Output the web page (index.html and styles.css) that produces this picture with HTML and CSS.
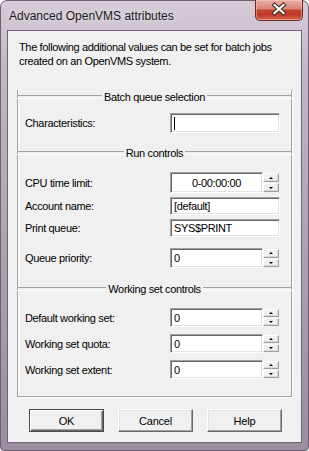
FILE: index.html
```html
<!DOCTYPE html>
<html lang="en">
<head>
    <meta charset="UTF-8">
    <title>Advanced OpenVMS attributes</title>
    <link rel="stylesheet" href="styles.css">
</head>
<body>
    <div class="window">
        <div class="titlebar">
            <span class="title">Advanced OpenVMS attributes</span>
            <div class="close">
                <svg width="48" height="21" viewBox="0 0 48 21">
                    <path d="M19.5 6 L28.5 14 M28.5 6 L19.5 14" stroke="#3b2a2a" stroke-width="4.2" stroke-linecap="square"/>
                    <path d="M19.5 6 L28.5 14 M28.5 6 L19.5 14" stroke="#fff" stroke-width="2.2" stroke-linecap="square"/>
                </svg>
            </div>
        </div>

        <div class="client">
            <p class="intro">The following additional values can be set for batch jobs<br>created on an OpenVMS system.</p>

            <div class="group">
                <!-- Batch queue selection -->
                <div class="sep first"><span>Batch queue selection</span></div>
                <div class="row r-char">
                    <label>Characteristics:</label>
                    <div class="edit"><span class="caret"></span></div>
                </div>

                <!-- Run controls -->
                <div class="sep s-run"><span>Run controls</span></div>
                <div class="row r-cpu">
                    <label>CPU time limit:</label>
                    <div class="edit spin-edit center">0-00:00:00</div>
                    <div class="spin"><div class="up"><i></i></div><div class="down"><i></i></div></div>
                </div>
                <div class="row r-acct">
                    <label>Account name:</label>
                    <div class="edit">[default]</div>
                </div>
                <div class="row r-print">
                    <label>Print queue:</label>
                    <div class="edit">SYS$PRINT</div>
                </div>
                <div class="row r-prio">
                    <label>Queue priority:</label>
                    <div class="edit spin-edit">0</div>
                    <div class="spin"><div class="up"><i></i></div><div class="down"><i></i></div></div>
                </div>

                <!-- Working set controls -->
                <div class="sep s-work"><span>Working set controls</span></div>
                <div class="row r-ws1">
                    <label>Default working set:</label>
                    <div class="edit spin-edit">0</div>
                    <div class="spin"><div class="up"><i></i></div><div class="down"><i></i></div></div>
                </div>
                <div class="row r-ws">
                    <label>Working set quota:</label>
                    <div class="edit spin-edit">0</div>
                    <div class="spin"><div class="up"><i></i></div><div class="down"><i></i></div></div>
                </div>
                <div class="row r-ws">
                    <label>Working set extent:</label>
                    <div class="edit spin-edit">0</div>
                    <div class="spin"><div class="up"><i></i></div><div class="down"><i></i></div></div>
                </div>
            </div>

            <div class="buttons">
                <button class="btn default">OK</button>
                <button class="btn">Cancel</button>
                <button class="btn">Help</button>
            </div>
        </div>
    </div>
</body>
</html>
```

FILE: styles.css
```css
* {
    box-sizing: border-box;
}
body {
    margin: 0;
    background: #fff;
    font-family: "Liberation Sans", Arial, sans-serif;
    font-size: 11px;
    color: #000;
}
.window {
    width: 309px;
    height: 451px;
    border: 1px solid #6b5f70;
    border-radius: 7px 7px 4px 4px;
    background: linear-gradient(#d6cdd8, #c2b7c6 15%, #ab9eb0 60%, #9c8ea1);
    padding: 0 6px 7px;
    display: flex;
    flex-direction: column;
}
.titlebar {
    height: 29px;
    margin: 0 -6px;
    padding: 0 5px 0 8px;
    display: flex;
    justify-content: space-between;
    align-items: flex-start;
}
.title {
    margin-top: 8px;
    font-size: 12px;
    line-height: 14px;
    color: #1a1a1a;
    text-shadow: 0 0 6px rgba(255, 255, 255, 0.7);
}
.close {
    width: 48px;
    height: 21px;
    margin-top: -1px;
    border: 1px solid #6a2b25;
    border-top: none;
    border-radius: 0 0 5px 5px;
    background: linear-gradient(#eab0a4, #d98374 45%, #c5442f 50%, #c0392a 75%, #d9694e);
    box-shadow: inset 0 0 0 1px rgba(255, 210, 200, 0.45);
    overflow: hidden;
}
.close svg {
    display: block;
    margin: -1px 0 0 -1px;
}
.client {
    flex: 1;
    background: #f0f0f0;
    border: 1px solid #6f6474;
    padding: 9px 0 0 0;
}
.intro {
    margin: 0 0 0 11px;
    line-height: 14px;
    letter-spacing: -0.35px;
}
.group {
    margin: 28px 0 0 9px;
    width: 275px;
    border: 1px solid #a0a0a0;
    border-top: none;
    box-shadow: inset 1px 0 0 #fff, 1px 1px 0 #fff;
    padding: 0 0 17px 7px;
}
.sep {
    height: 14px;
    margin: 0 -1px 0 -8px;
    display: flex;
    align-items: center;
    letter-spacing: -0.35px;
}
.sep::before, .sep::after {
    content: "";
    flex: 1;
    height: 2px;
    border-top: 1px solid #a0a0a0;
    border-bottom: 1px solid #fff;
}
.sep span {
    padding: 0 2px;
    line-height: 14px;
}
.sep.first {
    margin-top: -6px;
}
.s-run {
    margin-top: 13px;
}
.s-work {
    margin-top: 14px;
}
.row {
    display: flex;
    align-items: center;
    letter-spacing: -0.35px;
}
.row label {
    width: 145px;
    flex: none;
}
.edit {
    width: 110px;
    height: 100%;
    background: #fff;
    border: 1px solid;
    border-color: #a0a0a0 #fff #fff #a0a0a0;
    box-shadow: inset 1px 1px 0 #696969, inset -1px -1px 0 #e3e3e3;
    padding: 0 3px;
    display: flex;
    align-items: center;
    white-space: nowrap;
}
.spin-edit {
    width: 93px;
}
.center {
    justify-content: center;
}
.caret {
    width: 1px;
    height: 13px;
    background: #000;
}
.spin {
    width: 16px;
    height: 100%;
    display: flex;
    flex-direction: column;
    gap: 1px;
    padding: 1px 0;
}
.spin div {
    flex: 1;
    background: #f0f0f0;
    border: 1px solid;
    border-color: #fff #a0a0a0 #a0a0a0 #fff;
    box-shadow: inset -1px -1px 0 #d8d8d8;
    display: flex;
    justify-content: center;
    align-items: center;
}
.spin i {
    width: 0;
    height: 0;
    border-left: 2px solid transparent;
    border-right: 2px solid transparent;
}
.spin .up i {
    border-bottom: 2px solid #000;
}
.spin .down i {
    border-top: 2px solid #000;
}
.r-char {
    margin-top: 9px;
    height: 20px;
}
.r-cpu {
    margin-top: 12px;
    height: 21px;
}
.r-acct {
    margin-top: 4px;
    height: 18px;
}
.r-print {
    margin-top: 4px;
    height: 18px;
}
.r-prio {
    margin-top: 11px;
    height: 20px;
}
.r-ws1 {
    margin-top: 12px;
    height: 19px;
}
.r-ws {
    margin-top: 7px;
    height: 19px;
}
.buttons {
    margin: 12px 0 0 21px;
    display: flex;
    gap: 14px;
}
.btn {
    width: 75px;
    height: 23px;
    padding: 0;
    font-family: "Liberation Sans", Arial, sans-serif;
    font-size: 11px;
    letter-spacing: -0.2px;
    color: #000;
    background: #f0f0f0;
    border: 1px solid;
    border-color: #fff #696969 #696969 #fff;
    box-shadow: inset -1px -1px 0 #a0a0a0, inset 1px 1px 0 #e3e3e3;
}
.btn.default {
    border: 1px solid #4a4a4a;
    box-shadow: inset 1px 1px 0 #fff, inset -1px -1px 0 #696969, inset -2px -2px 0 #a0a0a0;
}
```
